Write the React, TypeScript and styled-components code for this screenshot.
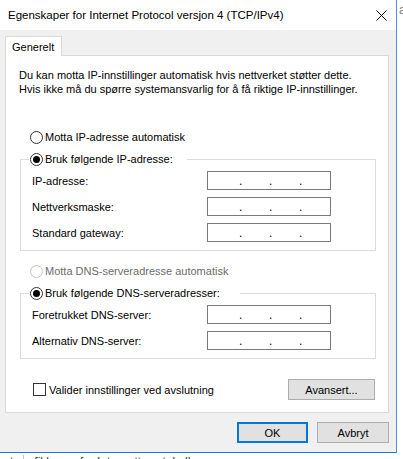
import styled, { createGlobalStyle } from "styled-components";

const GlobalStyle = createGlobalStyle`
  html, body {
    margin: 0;
    padding: 0;
    background: #ffffff;
  }
  body {
    font-family: "Liberation Sans", Arial, sans-serif;
    font-size: 11px;
    color: #000;
  }
`;

const Page = styled.div`
  width: 403px;
  height: 459px;
  overflow: hidden;
  display: grid;
  grid-template-columns: 397px 1fr;
  grid-template-rows: 453px 1fr;
`;

const Window = styled.div`
  display: flex;
  flex-direction: column;
  background: #f0f0f0;
  border-right: 1px solid #4f8fd6;
  border-bottom: 1px solid #1c7ad6;
  overflow: hidden;
`;

const TitleBar = styled.div`
  flex-shrink: 0;
  height: 30px;
  background: #ffffff;
  display: flex;
  align-items: center;
  justify-content: space-between;
  padding: 0 9px 0 8px;
`;

const Title = styled.div`
  font-size: 11.5px;
  color: #000;
`;

const Content = styled.div`
  flex: 1;
  display: flex;
  flex-direction: column;
  padding: 6px 7px 0 5px;
`;

const TabStrip = styled.div`
  display: flex;
  position: relative;
  z-index: 1;
  margin-bottom: -1px;
`;

const Tab = styled.div`
  height: 19px;
  padding: 0 7px 0 6px;
  display: flex;
  align-items: center;
  background: #ffffff;
  border: 1px solid #d9d9d9;
  border-bottom: none;
`;

const Panel = styled.div`
  background: #ffffff;
  border: 1px solid #d9d9d9;
  padding: 12px 12px 12px 13px;
  display: flex;
  flex-direction: column;
`;

const Description = styled.p`
  margin: 0;
  line-height: 14px;
  white-space: nowrap;
`;

const OptionRow = styled.div<{ $top: number; $disabled?: boolean }>`
  display: flex;
  align-items: center;
  gap: 2px;
  height: 20px;
  margin: ${(p) => p.$top}px 0 0 11px;
  color: ${(p) => (p.$disabled ? "#6d6d6d" : "#000")};
`;

const Radio = styled.span<{ $checked?: boolean; $disabled?: boolean }>`
  width: 11px;
  height: 11px;
  border-radius: 50%;
  border: 1px solid ${(p) => (p.$disabled ? "#c4c4c4" : "#333333")};
  background: #fff;
  display: flex;
  align-items: center;
  justify-content: center;
  flex-shrink: 0;

  &::after {
    content: "";
    display: ${(p) => (p.$checked ? "block" : "none")};
    width: 7px;
    height: 7px;
    border-radius: 50%;
    background: #000;
  }
`;

const Group = styled.fieldset<{ $top: number }>`
  margin: ${(p) => p.$top}px 0 0 1px;
  padding: 2px 11px 8px 11px;
  border: 1px solid #dcdcdc;
  min-width: 0;
  display: flex;
  flex-direction: column;
  gap: 7px;
`;

const Legend = styled.legend<{ $width: number }>`
  width: ${(p) => p.$width}px;
  height: 20px;
  padding: 0 0 0 1px;
  margin-left: -3px;
  box-sizing: border-box;
`;

const LegendInner = styled.span`
  display: flex;
  align-items: center;
  gap: 2px;
  height: 20px;
`;

const FieldRow = styled.div`
  display: flex;
  align-items: center;
  height: 19px;
`;

const FieldLabel = styled.span`
  width: 175px;
  flex-shrink: 0;
`;

const IpBox = styled.div`
  width: 124px;
  height: 19px;
  box-sizing: border-box;
  border: 1px solid #7a7a7a;
  background: #fff;
  display: flex;
  align-items: flex-end;
`;

const Octet = styled.span<{ $w: number }>`
  width: ${(p) => p.$w}px;
`;

const Dot = styled.span`
  width: 3px;
  text-align: center;
  line-height: 16px;
  font-size: 12px;
`;

const FooterRow = styled.div`
  display: flex;
  align-items: center;
  justify-content: space-between;
  margin: 20px 1px 0 14px;
`;

const CheckLabel = styled.label`
  display: flex;
  align-items: center;
  gap: 3px;
`;

const CheckBox = styled.span`
  width: 11px;
  height: 11px;
  border: 1px solid #333333;
  background: #fff;
`;

const Button = styled.button<{ $w: number; $default?: boolean }>`
  width: ${(p) => p.$w}px;
  height: 21px;
  box-sizing: border-box;
  padding: 0;
  font-family: inherit;
  font-size: 11px;
  color: #000;
  background: #e1e1e1;
  border: ${(p) => (p.$default ? "2px solid #0078d7" : "1px solid #adadad")};
`;

const ButtonRow = styled.div`
  display: flex;
  justify-content: flex-end;
  gap: 9px;
  margin-top: 9px;
`;

const RightStrip = styled.div`
  padding: 3px 0 0 2px;
  color: #7a7a7a;
  font-size: 12px;
  overflow: hidden;
  white-space: nowrap;
`;

const BottomStrip = styled.div`
  grid-column: 1 / span 2;
  display: flex;
  gap: 10px;
  padding: 2px 0 0 10px;
  color: #333;
  font-size: 12px;
  white-space: nowrap;
  overflow: hidden;
`;

const Separator = styled.span`
  width: 1px;
  height: 12px;
  background: #c8c8c8;
`;

const IpField = () => (
  <IpBox>
    <Octet $w={31} />
    <Dot>.</Dot>
    <Octet $w={27} />
    <Dot>.</Dot>
    <Octet $w={27} />
    <Dot>.</Dot>
  </IpBox>
);

const CloseIcon = () => (
  <svg width="11" height="11" viewBox="0 0 11 11">
    <path d="M0.5 0.5 L10.5 10.5 M10.5 0.5 L0.5 10.5" stroke="#000" strokeWidth="1" />
  </svg>
);

const ipFields = ["IP-adresse:", "Nettverksmaske:", "Standard gateway:"];
const dnsFields = ["Foretrukket DNS-server:", "Alternativ DNS-server:"];

export default function App() {
  return (
    <>
      <GlobalStyle />
      <Page>
        <Window>
          <TitleBar>
            <Title>Egenskaper for Internet Protocol versjon 4 (TCP/IPv4)</Title>
            <CloseIcon />
          </TitleBar>
          <Content>
            <TabStrip>
              <Tab>Generelt</Tab>
            </TabStrip>
            <Panel>
              <Description>
                Du kan motta IP-innstillinger automatisk hvis nettverket støtter dette.
                <br />
                Hvis ikke må du spørre systemansvarlig for å få riktige IP-innstillinger.
              </Description>

              <OptionRow $top={31}>
                <Radio />
                Motta IP-adresse automatisk
              </OptionRow>
              <Group $top={2}>
                <Legend $width={158}>
                  <LegendInner>
                    <Radio $checked />
                    Bruk følgende IP-adresse:
                  </LegendInner>
                </Legend>
                {ipFields.map((f) => (
                  <FieldRow key={f}>
                    <FieldLabel>{f}</FieldLabel>
                    <IpField />
                  </FieldRow>
                ))}
              </Group>

              <OptionRow $top={10} $disabled>
                <Radio $disabled />
                Motta DNS-serveradresse automatisk
              </OptionRow>
              <Group $top={2}>
                <Legend $width={211}>
                  <LegendInner>
                    <Radio $checked />
                    Bruk følgende DNS-serveradresser:
                  </LegendInner>
                </Legend>
                {dnsFields.map((f) => (
                  <FieldRow key={f}>
                    <FieldLabel>{f}</FieldLabel>
                    <IpField />
                  </FieldRow>
                ))}
              </Group>

              <FooterRow>
                <CheckLabel>
                  <CheckBox />
                  Valider innstillinger ved avslutning
                </CheckLabel>
                <Button $w={87}>Avansert...</Button>
              </FooterRow>
            </Panel>
            <ButtonRow>
              <Button $w={71} $default>
                OK
              </Button>
              <Button $w={72}>Avbryt</Button>
            </ButtonRow>
          </Content>
        </Window>
        <RightStrip>a</RightStrip>
        <BottomStrip>
          <span>t</span>
          <Separator />
          <span>fil kaper for Internett-protokollen</span>
        </BottomStrip>
      </Page>
    </>
  );
}
